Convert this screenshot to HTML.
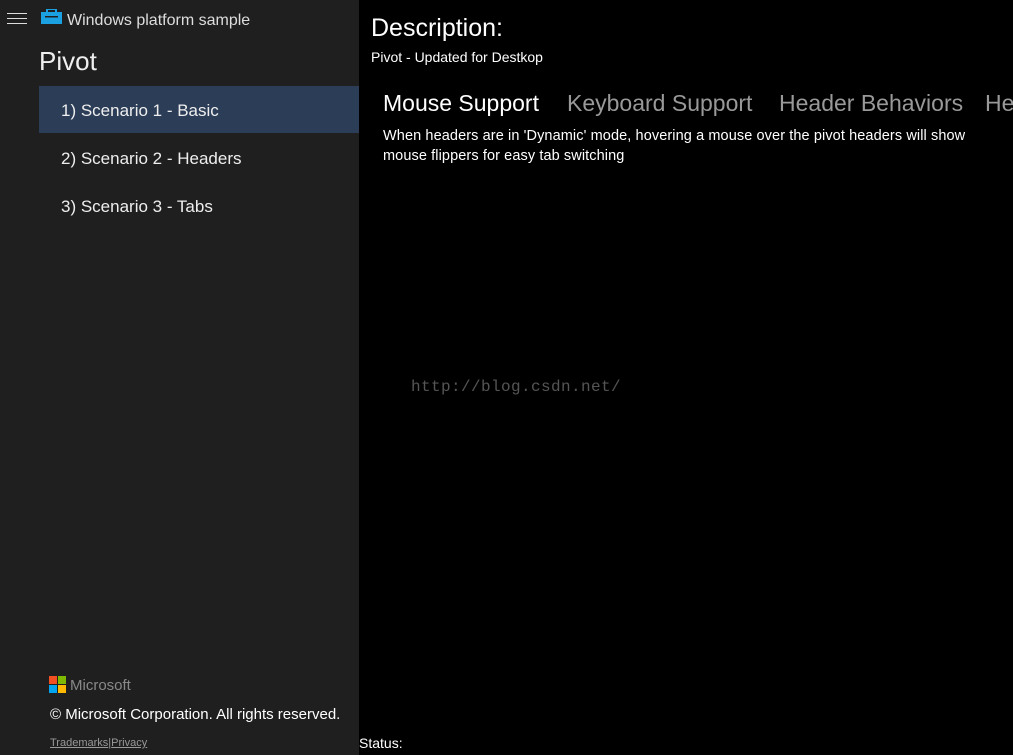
<!DOCTYPE html>
<html><head><meta charset="utf-8"><style>
body{margin:0;width:1013px;height:755px;background:#000;position:relative;overflow:hidden;font-family:"Liberation Sans",sans-serif;color:#fff}
.side{position:absolute;left:0;top:0;width:359px;height:755px;background:#1f1f1f}
.a{position:absolute;white-space:nowrap}
.ham{position:absolute;left:7px;width:20px;height:1px;background:#ddd}
</style></head><body>
<div class="side">
<div class="ham" style="top:13px"></div><div class="ham" style="top:18px"></div><div class="ham" style="top:23px"></div>
<svg class="a" style="left:41px;top:9px" width="22" height="16"><rect x="0" y="3" width="21" height="12" fill="#1ba1e2"/><rect x="6" y="0" width="9" height="4" fill="none" stroke="#1ba1e2" stroke-width="2"/><rect x="4" y="7" width="13" height="1.5" fill="#1f1f1f"/></svg>
<div class="a" style="left:67px;top:12px;font-size:16px;color:#ddd">Windows platform sample</div>
<div class="a" style="left:39px;top:46px;font-size:26px;color:#eee">Pivot</div>
<div class="a" style="left:39px;top:86px;width:320px;height:47px;background:#2b3d57"></div>
<div class="a" style="left:61px;top:101px;font-size:17px;color:#eee">1) Scenario 1 - Basic</div>
<div class="a" style="left:61px;top:149px;font-size:17px;color:#eee">2) Scenario 2 - Headers</div>
<div class="a" style="left:61px;top:197px;font-size:17px;color:#eee">3) Scenario 3 - Tabs</div>
<svg class="a" style="left:49px;top:676px" width="18" height="18"><rect width="8" height="8" fill="#f25022"/><rect x="9" width="8" height="8" fill="#7fba00"/><rect y="9" width="8" height="8" fill="#00a4ef"/><rect x="9" y="9" width="8" height="8" fill="#ffb900"/></svg>
<div class="a" style="left:70px;top:677px;font-size:15px;color:#888">Microsoft</div>
<div class="a" style="left:50px;top:706px;font-size:15px;color:#fff">© Microsoft Corporation. All rights reserved.</div>
<div class="a" style="left:50px;top:737px;font-size:11px;color:#999"><u>Trademarks</u>|<u>Privacy</u></div>
</div>
<div class="a" style="left:359px;top:735px;font-size:14px">Status:</div>
<div class="a" style="left:371px;top:14px;font-size:25px">Description:</div>
<div class="a" style="left:371px;top:49px;font-size:14px">Pivot - Updated for Destkop</div>
<div class="a" style="left:383px;top:90px;font-size:23px">Mouse Support</div>
<div class="a" style="left:567px;top:90px;font-size:23px;color:#999">Keyboard Support</div>
<div class="a" style="left:779px;top:90px;font-size:23px;color:#999">Header Behaviors</div>
<div class="a" style="left:985px;top:90px;font-size:23px;color:#999">He</div>
<div class="a" style="left:383px;top:126px;font-size:14.5px;line-height:20px;letter-spacing:0.1px">When headers are in 'Dynamic' mode, hovering a mouse over the pivot headers will show<br>mouse flippers for easy tab switching</div>
<div class="a" style="left:411px;top:378px;font-size:16px;color:#555;font-family:'Liberation Mono',monospace;letter-spacing:0.4px">http://blog.csdn.net/</div>
</body></html>
